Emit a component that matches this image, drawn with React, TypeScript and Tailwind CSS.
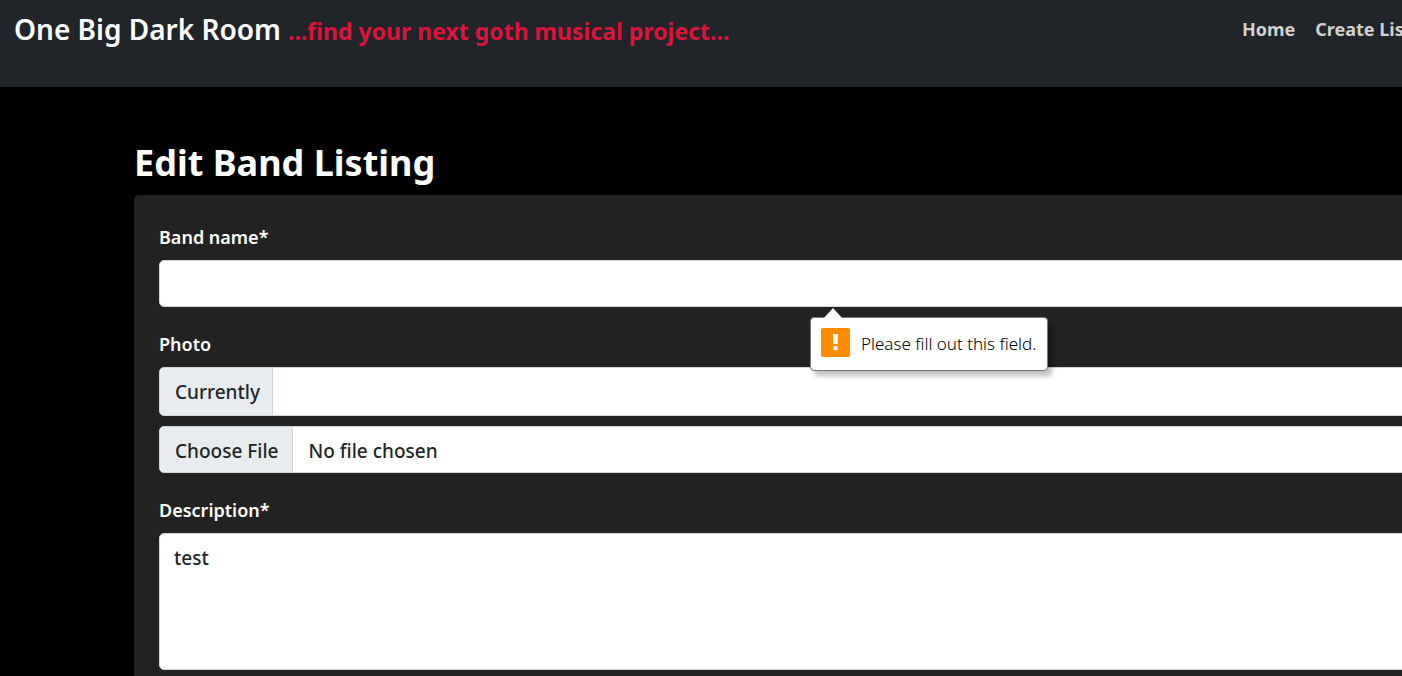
import { useState } from "react";

function ValidationBubble({ message }: { message: string }) {
  return (
    <div
      id="band-name-error"
      role="alert"
      className="absolute top-full left-1/2 z-10 mt-[10px] -ml-[23px] flex h-[54px] items-center gap-[11px] rounded-[4px] border border-[#767676] bg-white pr-[11px] pl-[10px] whitespace-nowrap shadow-[4px_5px_5px_rgba(0,0,0,0.25)]"
    >
      <svg
        aria-hidden="true"
        viewBox="0 0 20 11"
        className="absolute -top-[10px] left-[12px] h-[11px] w-[20px]"
      >
        <path d="M0 11 L10 0 L20 11 Z" fill="#fff" />
      </svg>
      <svg aria-hidden="true" viewBox="0 0 29 29" className="-mt-[4px] size-[29px]">
        <rect width="29" height="29" rx="2" fill="#ff8c00" />
        <path d="M12 6h5l-0.4 10h-4.2z" fill="#fff" />
        <circle cx="14.5" cy="20.2" r="2.4" fill="#fff" />
      </svg>
      <span className="font-['Noto_Sans',sans-serif] text-[17px] leading-6 font-light text-black">
        {message}
      </span>
    </div>
  );
}

const label = "mb-[8px] block pt-[2px] text-[18px] leading-[30px] font-semibold";
const control =
  "block w-full rounded-[5px] border border-[#ced4da] bg-white text-[19px] leading-[30px] font-medium text-[#212529] outline-none";

export default function App() {
  const [name, setName] = useState("");
  const [description, setDescription] = useState("test");

  return (
    <div className="min-h-screen overflow-hidden bg-black font-['Noto_Sans',sans-serif] text-white">
      <header className="flex h-[87px] items-start bg-[#212529] pl-[14px]">
        <a href="#" className="flex items-baseline gap-[7px] pt-[9px] whitespace-nowrap">
          <span className="text-[28px] leading-[40px] font-semibold">One Big Dark Room</span>
          <span className="text-[23px] leading-[40px] font-bold text-[#dc143c]">
            ...find your next goth musical project...
          </span>
        </a>
        <nav className="-mr-[38px] ml-auto flex gap-[20px] pt-[14px] text-[18px] leading-[30px] font-bold whitespace-nowrap text-[#d3d0d0]">
          <a href="#">Home</a>
          <a href="#">Create Listing</a>
        </nav>
      </header>

      <main className="-mr-[130px] pt-[52px] pl-[134px]">
        <h1 className="mb-[8px] text-[36px] leading-[48px] font-bold">Edit Band Listing</h1>
        <form
          noValidate
          onSubmit={(e) => e.preventDefault()}
          className="flex flex-col gap-[20px] rounded-[5px] bg-[#222] p-[25px]"
        >
          <div>
            <label htmlFor="band-name" className={label}>
              Band name*
            </label>
            <div className="relative">
              <input
                id="band-name"
                type="text"
                required
                aria-describedby="band-name-error"
                value={name}
                onChange={(e) => setName(e.target.value)}
                className={`${control} h-[47px] px-[15px]`}
              />
              {name === "" && <ValidationBubble message="Please fill out this field." />}
            </div>
          </div>

          <div>
            <label htmlFor="photo" className={label}>
              Photo
            </label>
            <div className={`${control} mb-[10px] flex h-[49px] overflow-hidden`}>
              <span className="flex items-center border-r border-[#ced4da] bg-[#e9ecef] pr-[12px] pl-[15px]">
                Currently
              </span>
            </div>
            <input
              id="photo"
              type="file"
              className={`${control} h-[47px] overflow-hidden file:mr-[15px] file:h-[45px] file:border-0 file:border-r file:border-solid file:border-[#ced4da] file:bg-[#e9ecef] file:pt-[2px] file:pr-[14px] file:pl-[15px] file:text-[#212529]`}
            />
          </div>

          <div>
            <label htmlFor="description" className={label}>
              Description*
            </label>
            <textarea
              id="description"
              required
              value={description}
              onChange={(e) => setDescription(e.target.value)}
              className={`${control} h-[137px] resize-none px-[14px] py-[9px]`}
            />
          </div>
        </form>
      </main>
    </div>
  );
}
